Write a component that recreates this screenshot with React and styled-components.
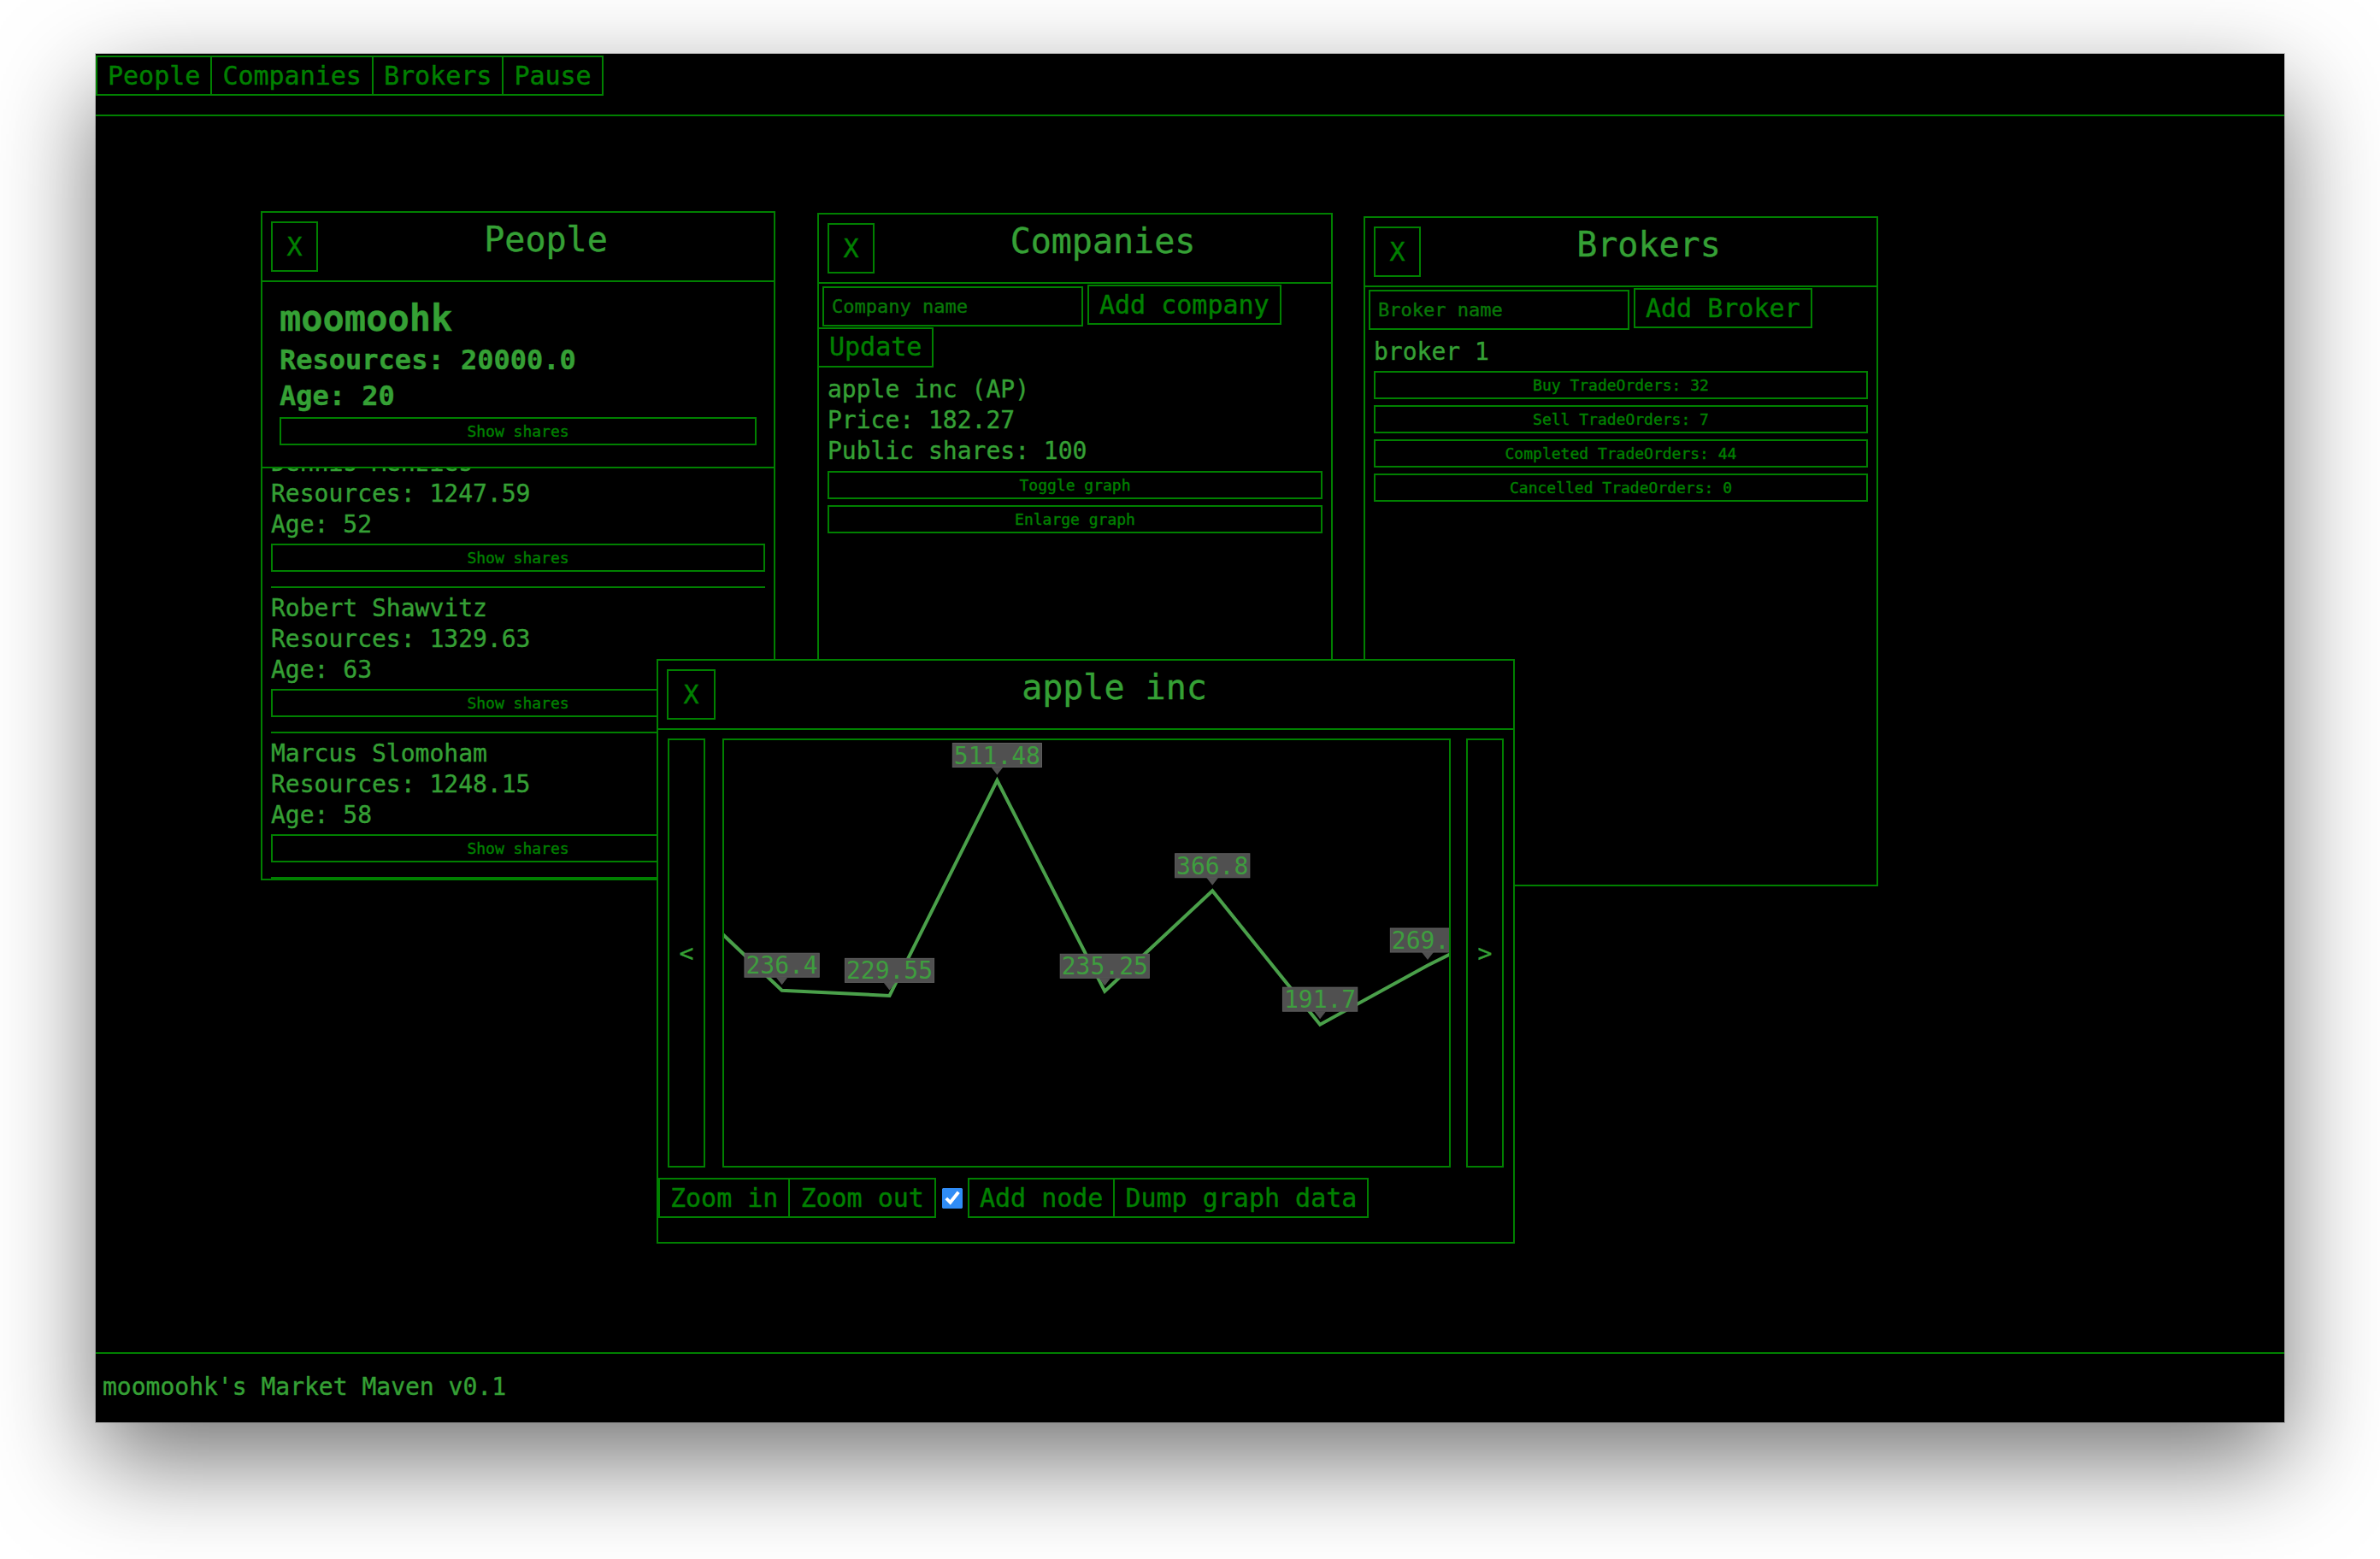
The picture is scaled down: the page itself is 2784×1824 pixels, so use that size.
import React, { useLayoutEffect, useRef } from 'react';
import styled, { createGlobalStyle } from 'styled-components';

const GREEN = '#008000';
const TEXT = '#35a035';
const MONO = `"DejaVu Sans Mono", "Liberation Mono", monospace`;

const GlobalStyle = createGlobalStyle`
  * { box-sizing: border-box; }
  html, body { margin: 0; padding: 0; background: #fff; }
  body { font-family: ${MONO}; overflow: hidden; }
`;

const Screen = styled.div`
  width: 2784px;
  height: 1824px;
  padding: 63px 112px 0;
  overflow: hidden;
`;

const Window = styled.div`
  width: 2560px;
  height: 1601px;
  background: #000;
  display: flex;
  flex-direction: column;
  overflow: hidden;
  -webkit-text-stroke: 0.4px;
  box-shadow: 0 44px 110px rgba(0, 0, 0, 0.55), 0 0 0 1px rgba(0, 0, 0, 0.2);
`;

const Header = styled.nav`
  height: 73px;
  flex-shrink: 0;
  padding-top: 2px;
  display: flex;
  align-items: flex-start;
  border-bottom: 2px solid ${GREEN};
`;

const Button = styled.button`
  font-family: ${MONO};
  font-size: ${p => p.$fs || 30}px;
  line-height: 1;
  color: ${GREEN};
  background: #000;
  border: 2px solid ${GREEN};
  height: ${p => p.$h || 47}px;
  padding: 0 12px;
  margin: 0;
  cursor: pointer;
  white-space: nowrap;

  & + & {
    margin-left: -2px;
  }
`;

const Desktop = styled.main`
  flex: 1;
  position: relative;
`;

const Footer = styled.footer`
  height: 82px;
  flex-shrink: 0;
  border-top: 2px solid ${GREEN};
  display: flex;
  align-items: center;
  padding: 0 8px 4px;
  font-size: 28px;
  color: ${TEXT};
`;

/* floating windows on the desktop */
const Panel = styled.section`
  position: absolute;
  left: ${p => p.$x}px;
  top: ${p => p.$y}px;
  width: ${p => p.$w}px;
  height: ${p => p.$h}px;
  z-index: ${p => p.$z || 1};
  background: #000;
  border: 2px solid ${GREEN};
  display: flex;
  flex-direction: column;
  overflow: hidden;
`;

const TitleBar = styled.header`
  height: 81px;
  flex-shrink: 0;
  display: flex;
  align-items: flex-start;
  border-bottom: 2px solid ${GREEN};
`;

const CloseButton = styled(Button)`
  width: ${p => p.$w || 55}px;
  height: 59px;
  margin: 10px 0 10px 10px;
  padding: 0;
`;

const Title = styled.h1`
  flex: 1;
  margin: 0;
  padding-top: 8px;
  text-align: center;
  font-size: 40px;
  font-weight: normal;
  line-height: normal;
  color: ${TEXT};
`;

const WideButton = styled.button`
  display: block;
  width: 100%;
  height: 33px;
  margin: ${p => p.$mt || 0}px 0 0;
  padding: 0;
  font-family: ${MONO};
  font-size: 18px;
  color: ${GREEN};
  background: #000;
  border: 2px solid ${GREEN};
  cursor: pointer;
`;

/* people */
const SelfCard = styled.div`
  flex-shrink: 0;
  padding: 16px 20px 25px;
  border-bottom: 2px solid ${GREEN};
  color: ${TEXT};
`;

const SelfName = styled.h2`
  margin: 0;
  font-size: 42px;
  line-height: 54px;
  font-weight: bold;
`;

const SelfStat = styled.div`
  font-size: 32px;
  line-height: 42px;
  font-weight: bold;
`;

const PeopleList = styled.div`
  flex: 1;
  overflow: hidden;
`;

const Person = styled.div`
  margin: 0 10px;
  padding: 6px 0 17px;
  border-bottom: 2px solid ${GREEN};
`;

const Line = styled.div`
  font-size: 28px;
  line-height: 36px;
  color: ${TEXT};
  white-space: nowrap;
`;

/* forms */
const Form = styled.div`
  display: flex;
  flex-wrap: wrap;
  align-items: flex-start;
  row-gap: 1px;
  padding-top: 1px;
`;

const TextInput = styled.input`
  width: 305px;
  height: 47px;
  margin: 1.5px 5px 0 4px;
  padding: 0 9px;
  border: 2px solid ${GREEN};
  background: #000;
  color: ${GREEN};
  font-family: ${MONO};
  font-size: 22px;
  outline: none;

  &::placeholder {
    color: #087808;
  }
`;

const Section = styled.div`
  padding: 0 10px;
  margin-top: ${p => p.$mt || 0}px;
`;

const Stack = styled.div`
  display: flex;
  flex-direction: column;
  gap: 7px;
  margin-top: 4px;
`;

/* graph window */
const GraphRow = styled.div`
  display: flex;
  height: 502px;
  margin: 10px 11px 0;
`;

const SideButton = styled.button`
  width: 44px;
  padding: 0;
  background: #000;
  border: 2px solid ${GREEN};
  color: ${TEXT};
  font-family: ${MONO};
  font-size: 28px;
  cursor: pointer;
`;

const GraphBox = styled.div`
  flex: 1;
  margin: 0 18px 0 20px;
  border: 2px solid ${GREEN};
  overflow: hidden;

  svg {
    display: block;
  }
`;

const Toolbar = styled.div`
  display: flex;
  align-items: center;
  margin-top: 12px;
`;

const Check = styled.input`
  width: 24px;
  height: 24px;
  margin: 0 6px 0 7px;
  accent-color: #2f8cf6;
`;

const people = [
  { name: 'Dennis Menzies', res: '1247.59', age: 52 },
  { name: 'Robert Shawvitz', res: '1329.63', age: 63 },
  { name: 'Marcus Slomoham', res: '1248.15', age: 58 },
  { name: 'Jenny Ortega', res: '1301.22', age: 41 },
];

const orders = [
  'Buy TradeOrders: 32',
  'Sell TradeOrders: 7',
  'Completed TradeOrders: 44',
  'Cancelled TradeOrders: 0',
];

// prices shown in the graph; first and last lie outside the visible area
const prices = [370.1, 236.4, 229.55, 511.48, 235.25, 366.8, 191.7, 269.1, 340];

const toY = v => 47 + (511.48 - v) * 0.8934;
const toX = i => 67.6 + (i - 1) * 125.9;

const Graph = () => {
  const pts = prices.map((v, i) => [toX(i), toY(v)]);
  return (
    <svg width="100%" height="100%">
      <polyline
        points={pts.map(p => p.join(',')).join(' ')}
        fill="none"
        stroke="#4aa04a"
        strokeWidth="4"
        strokeLinejoin="miter"
      />
      {prices.slice(1, -1).map((v, k) => {
        const [x, y] = pts[k + 1];
        const label = String(v);
        const w = label.length * 16.86 + 3;
        const bottom = y - 15.5;
        return (
          <g key={k}>
            <rect x={x - w / 2} y={bottom - 28} width={w} height={28} fill="#505050" stroke="#5e5e5e" strokeWidth="1" />
            <polygon points={`${x - 7},${bottom} ${x + 7},${bottom} ${x},${bottom + 9}`} fill="#505050" />
            <text
              x={x}
              y={bottom - 4}
              textAnchor="middle"
              fontFamily="DejaVu Sans Mono, monospace"
              fontSize="28"
              fill="#3e9e3e"
            >
              {label}
            </text>
          </g>
        );
      })}
    </svg>
  );
};

const App = () => {
  const listRef = useRef(null);

  useLayoutEffect(() => {
    if (listRef.current) listRef.current.scrollTop = 30;
  }, []);

  return (
    <Screen>
      <GlobalStyle />
      <Window>
        <Header>
          <Button>People</Button>
          <Button>Companies</Button>
          <Button>Brokers</Button>
          <Button>Pause</Button>
        </Header>

        <Desktop>
          <Panel $x={193} $y={111} $w={602} $h={783}>
            <TitleBar>
              <CloseButton>X</CloseButton>
              <Title>People</Title>
            </TitleBar>
            <SelfCard>
              <SelfName>moomoohk</SelfName>
              <SelfStat>Resources: 20000.0</SelfStat>
              <SelfStat>Age: 20</SelfStat>
              <WideButton $mt={4}>Show shares</WideButton>
            </SelfCard>
            <PeopleList ref={listRef}>
              {people.map(p => (
                <Person key={p.name}>
                  <Line>{p.name}</Line>
                  <Line>Resources: {p.res}</Line>
                  <Line>Age: {p.age}</Line>
                  <WideButton $mt={4}>Show shares</WideButton>
                </Person>
              ))}
            </PeopleList>
          </Panel>

          <Panel $x={844} $y={113} $w={603} $h={783}>
            <TitleBar>
              <CloseButton>X</CloseButton>
              <Title>Companies</Title>
            </TitleBar>
            <Form>
              <TextInput placeholder="Company name" />
              <Button>Add company</Button>
              <Button>Update</Button>
            </Form>
            <Section $mt={8}>
              <Line>apple inc (AP)</Line>
              <Line>Price: 182.27</Line>
              <Line>Public shares: 100</Line>
              <WideButton $mt={5}>Toggle graph</WideButton>
              <WideButton $mt={7}>Enlarge graph</WideButton>
            </Section>
          </Panel>

          <Panel $x={1483} $y={117} $w={602} $h={784}>
            <TitleBar>
              <CloseButton>X</CloseButton>
              <Title>Brokers</Title>
            </TitleBar>
            <Form>
              <TextInput placeholder="Broker name" />
              <Button>Add Broker</Button>
            </Form>
            <Section $mt={8}>
              <Line>broker 1</Line>
              <Stack>
                {orders.map(o => (
                  <WideButton key={o}>{o}</WideButton>
                ))}
              </Stack>
            </Section>
          </Panel>

          <Panel $x={656} $y={635} $w={1004} $h={684} $z={5}>
            <TitleBar>
              <CloseButton $w={57}>X</CloseButton>
              <Title>apple inc</Title>
            </TitleBar>
            <GraphRow>
              <SideButton>&lt;</SideButton>
              <GraphBox>
                <Graph />
              </GraphBox>
              <SideButton>&gt;</SideButton>
            </GraphRow>
            <Toolbar>
              <Button>Zoom in</Button>
              <Button>Zoom out</Button>
              <Check type="checkbox" defaultChecked />
              <Button>Add node</Button>
              <Button>Dump graph data</Button>
            </Toolbar>
          </Panel>
        </Desktop>

        <Footer>moomoohk's Market Maven v0.1</Footer>
      </Window>
    </Screen>
  );
};

export default App;
